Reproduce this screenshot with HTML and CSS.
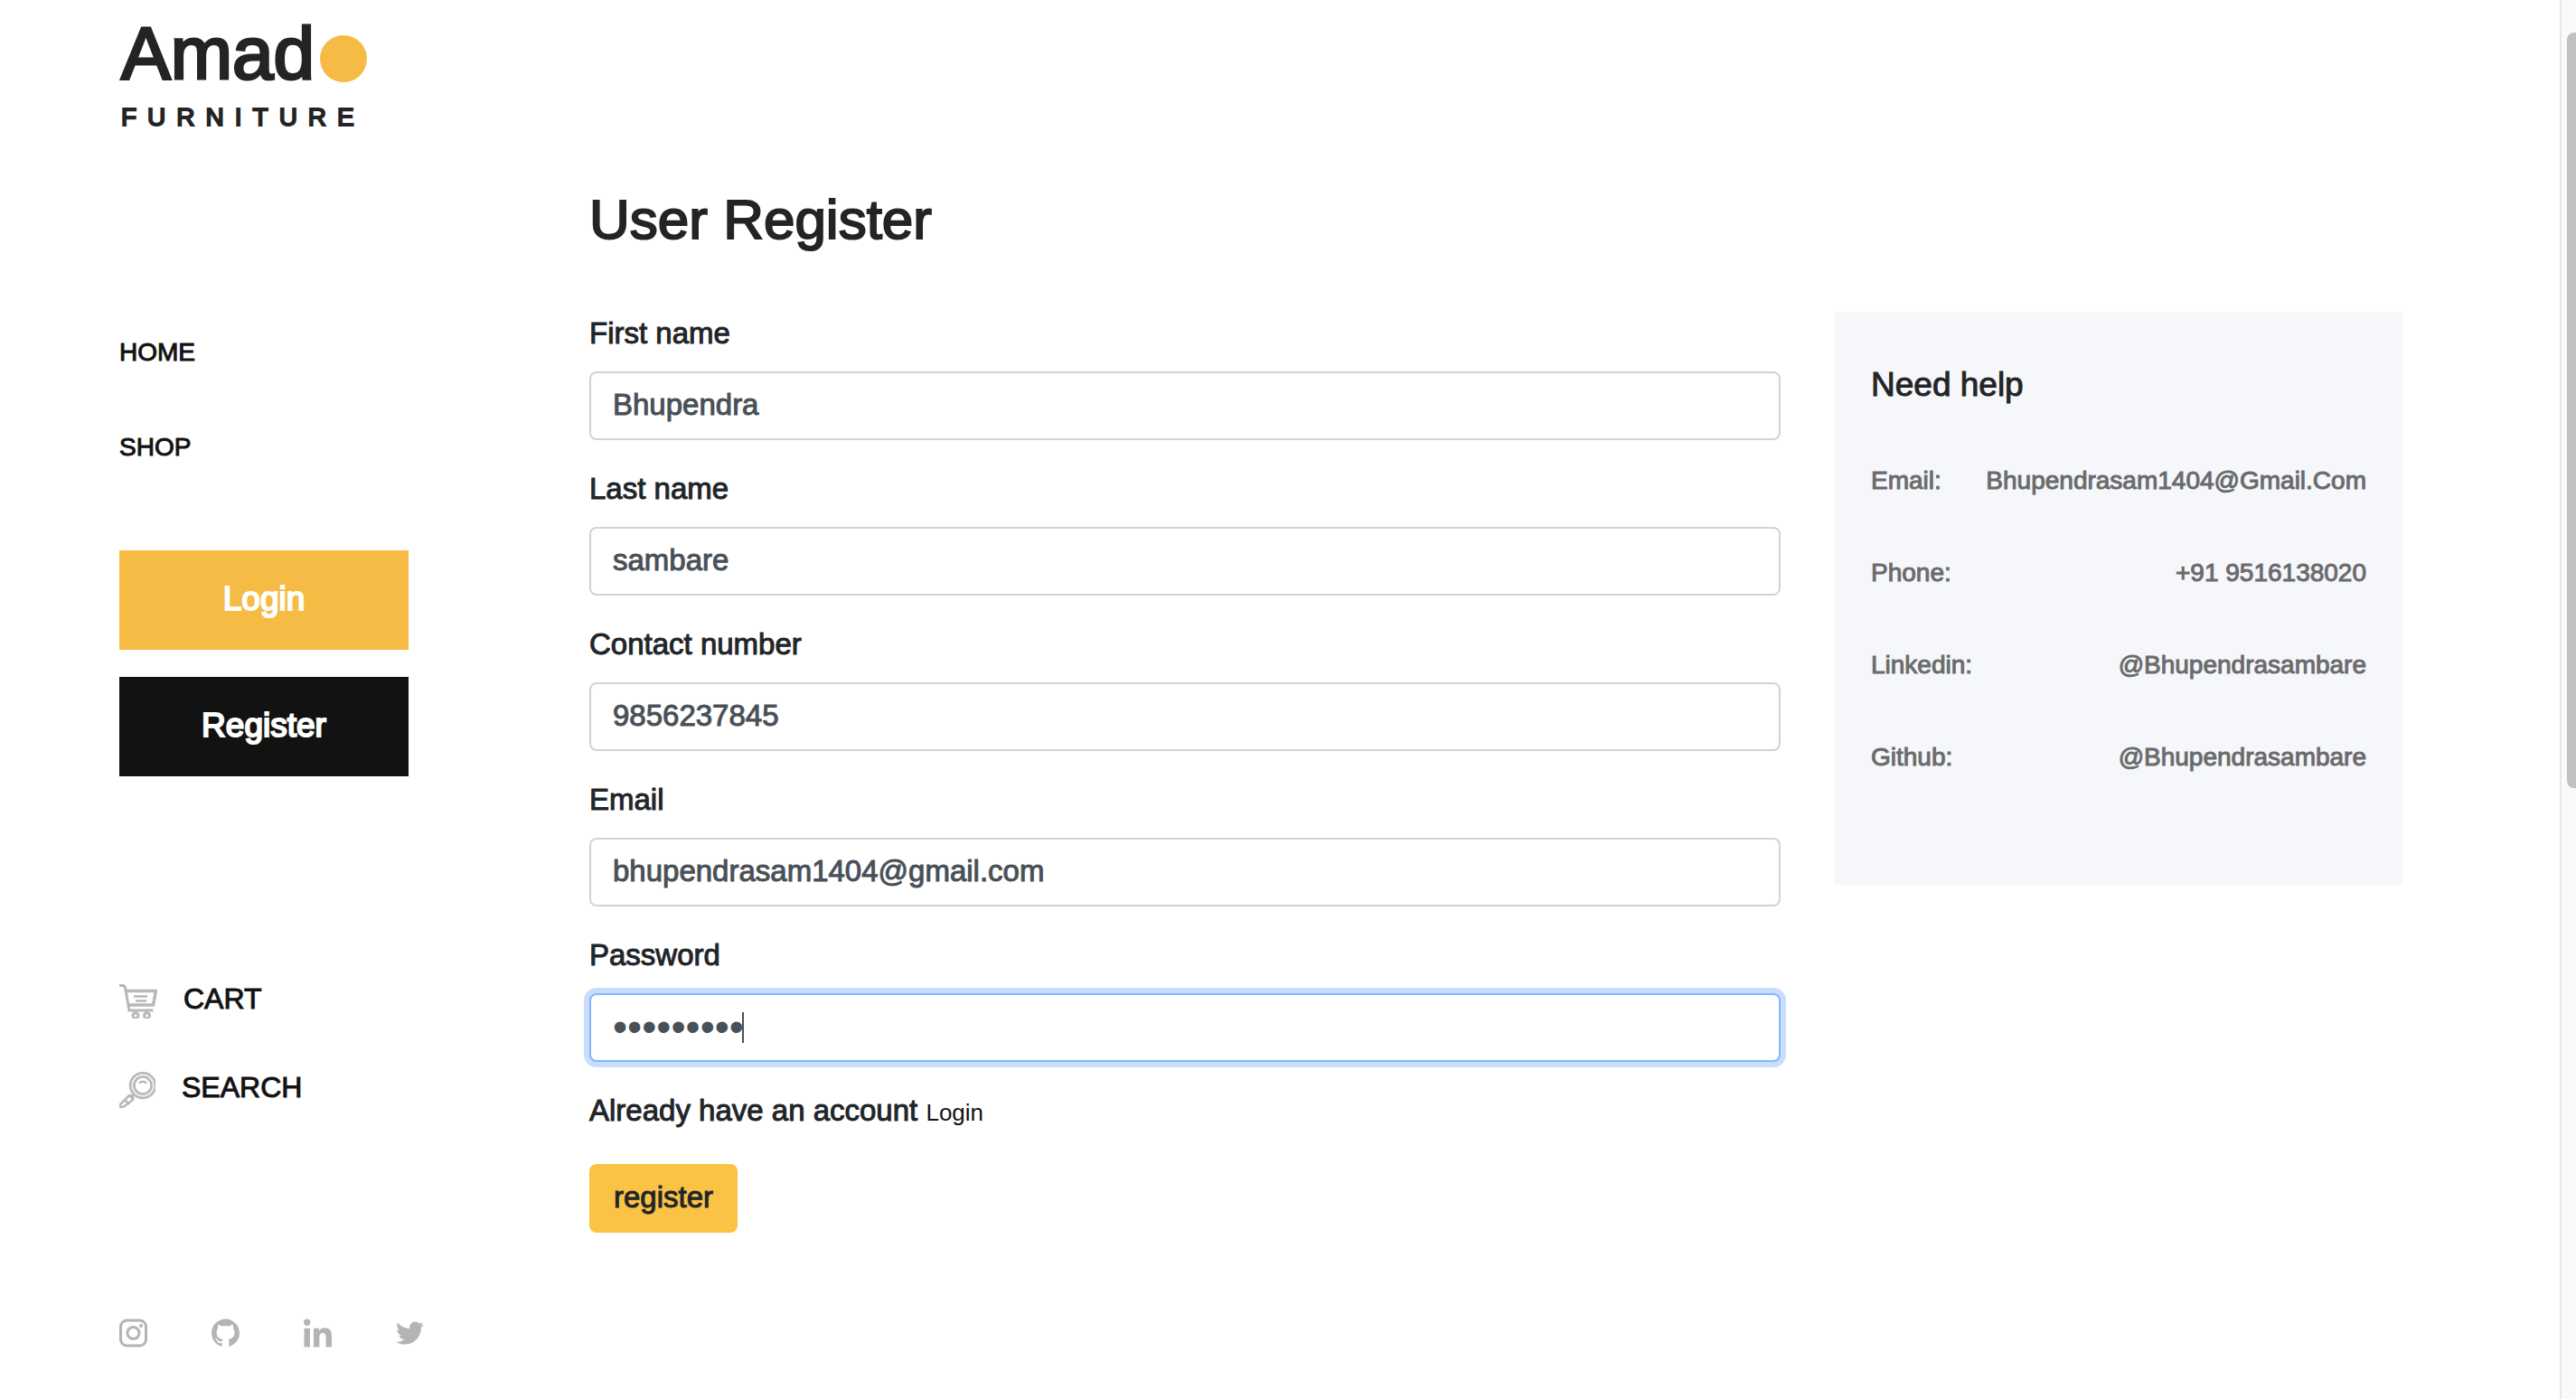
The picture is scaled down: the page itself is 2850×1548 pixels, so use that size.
FILE: index.html
```html
<!DOCTYPE html>
<html lang="en">
<head>
<meta charset="utf-8">
<title>Amado Furniture - User Register</title>
<link rel="stylesheet" href="styles.css">
</head>
<body>
<div class="page">
  <header class="sidebar">
    <a class="logo" href="#">
      <span class="logo-name">Amad<span class="logo-dot"></span></span>
      <span class="logo-tag">FURNITURE</span>
    </a>
    <nav class="nav">
      <a href="#">HOME</a>
      <a href="#">SHOP</a>
    </nav>
    <div class="account">
      <button class="block-btn" type="button">Login</button>
      <button class="block-btn dark" type="button">Register</button>
    </div>
    <div class="tools">
      <a href="#">
        <svg width="42" height="38" viewBox="0 0 42 38" fill="none" stroke="#b8b8b8" stroke-width="3">
          <path d="M0 1.500h3.500q2.500 0 3 2.500l4.500 25h26.500"/>
          <path d="M7 7.500h33.500l-3 15.500H10" stroke-width="3.500"/>
          <path d="M16 13.500h15M18 18.500h12" stroke-width="2.500"/>
          <circle cx="18" cy="34.800" r="3" stroke-width="3"/>
          <circle cx="30.500" cy="34.800" r="3" stroke-width="3"/>
        </svg>
        <span>CART</span>
      </a>
      <a href="#">
        <svg width="40" height="40" viewBox="0 0 40 40" fill="none" stroke="#b8b8b8" stroke-width="2.500">
          <circle cx="26" cy="15" r="14" fill="#ececec"/>
          <circle cx="26" cy="15" r="9.500" fill="#fff"/>
          <path d="M22 12.500q4-3.500 8 0"/>
          <path d="M16 25l-3 3M11 26l5 5M10.500 26.500L.5 36.500q0 3 3 3L15 31q1-2-1-4t-3.500-.5z"/>
          <path d="M6 31l5 5"/>
        </svg>
        <span>SEARCH</span>
      </a>
    </div>
    <div class="social">
      <a href="#" aria-label="Instagram">
        <svg width="31" height="32" viewBox="0 0 31 32" fill="none" stroke="#b4b4b4" stroke-width="3">
          <rect x="1.500" y="2" width="28" height="28" rx="7"/>
          <circle cx="15.500" cy="16" r="6.500"/>
          <circle cx="24" cy="8" r="2" fill="#b4b4b4" stroke="none"/>
        </svg>
      </a>
      <a href="#" aria-label="GitHub">
        <svg width="31" height="32" viewBox="0 0 16 16" fill="#b4b4b4"><path d="M8 0C3.580 0 0 3.580 0 8c0 3.540 2.290 6.530 5.470 7.590.4.070.55-.17.55-.38 0-.19-.01-.82-.01-1.490-2.010.37-2.530-.49-2.690-.94-.09-.23-.48-.94-.82-1.130-.28-.15-.68-.52-.01-.53.63-.01 1.080.58 1.230.82.72 1.210 1.870.87 2.330.66.070-.52.28-.87.51-1.070-1.780-.2-3.640-.89-3.640-3.950 0-.87.31-1.590.82-2.150-.08-.2-.36-1.020.08-2.120 0 0 .67-.21 2.200.82.64-.18 1.320-.27 2-.27s1.360.09 2 .27c1.530-1.040 2.200-.82 2.200-.82.44 1.100.16 1.920.08 2.120.51.56.82 1.270.82 2.150 0 3.070-1.870 3.750-3.650 3.950.29.25.54.73.54 1.480 0 1.070-.01 1.930-.01 2.200 0 .21.15.46.55.38A8.010 8.010 0 0 0 16 8c0-4.420-3.580-8-8-8z"/></svg>
      </a>
      <a href="#" aria-label="LinkedIn">
        <svg width="31" height="32" viewBox="0 0 448 448" fill="#b4b4b4"><path d="M100.280 448H7.400V148.900h92.880zM53.790 108.100C24.090 108.100 0 83.500 0 53.800a53.790 53.790 0 0 1 107.580 0c0 29.700-24.100 54.300-53.790 54.300zM447.900 448h-92.680V302.400c0-34.700-.7-79.200-48.290-79.200-48.290 0-55.690 37.700-55.690 76.700V448h-92.780V148.900h89.080v40.800h1.300c12.400-23.500 42.690-48.300 87.880-48.300 94 0 111.280 61.900 111.280 142.300V448z"/></svg>
      </a>
      <a href="#" aria-label="Twitter">
        <svg width="31" height="32" viewBox="0 0 512 512" fill="#b4b4b4"><path d="M459.370 151.716c.325 4.548.325 9.097.325 13.645 0 138.720-105.583 298.558-298.558 298.558-59.452 0-114.680-17.219-161.137-47.106 8.447.974 16.568 1.299 25.340 1.299 49.055 0 94.213-16.568 130.274-44.832-46.132-.975-84.792-31.188-98.112-72.772 6.498.974 12.995 1.624 19.818 1.624 9.421 0 18.843-1.300 27.614-3.573-48.081-9.747-84.143-51.980-84.143-102.985v-1.299c13.969 7.797 30.214 12.670 47.431 13.319-28.264-18.843-46.781-51.005-46.781-87.391 0-19.492 5.197-37.360 14.294-52.954 51.655 63.675 129.300 105.258 216.365 109.807-1.624-7.797-2.599-15.918-2.599-24.040 0-57.828 46.782-104.934 104.934-104.934 30.213 0 57.502 12.670 76.670 33.137 23.715-4.548 46.456-13.320 66.599-25.340-7.798 24.366-24.366 44.833-46.132 57.827 21.117-2.273 41.584-8.122 60.426-16.243-14.292 20.791-32.161 39.308-52.628 54.253z"/></svg>
      </a>
    </div>
  </header>

  <main class="main">
    <h1>User Register</h1>
    <div class="columns">
      <form class="form">
        <div class="field">
          <label for="first">First name</label>
          <input id="first" type="text" value="Bhupendra">
        </div>
        <div class="field">
          <label for="last">Last name</label>
          <input id="last" type="text" value="sambare">
        </div>
        <div class="field">
          <label for="contact">Contact number</label>
          <input id="contact" type="text" value="9856237845">
        </div>
        <div class="field">
          <label for="email">Email</label>
          <input id="email" type="email" value="bhupendrasam1404@gmail.com">
        </div>
        <div class="field">
          <label for="password">Password</label>
          <div class="password">
            <input id="password" class="active" type="password" value="secret123">
            <span class="caret"></span>
          </div>
        </div>
        <p class="hint">Already have an account <a href="#">Login</a></p>
        <button class="submit" type="button">register</button>
      </form>
      <aside class="help">
        <h2>Need help</h2>
        <dl>
          <div><dt>Email:</dt><dd>Bhupendrasam1404@Gmail.Com</dd></div>
          <div><dt>Phone:</dt><dd>+91 9516138020</dd></div>
          <div><dt>Linkedin:</dt><dd>@Bhupendrasambare</dd></div>
          <div><dt>Github:</dt><dd>@Bhupendrasambare</dd></div>
        </dl>
      </aside>
    </div>
  </main>

  <div class="scroll-track"><div class="scroll-thumb"></div></div>
</div>
</body>
</html>
```
FILE: styles.css
```css
* {
  box-sizing: border-box;
}

body,
h1,
h2,
p,
dl,
dd {
  margin: 0;
}

body {
  background: #fff;
  color: #212529;
  font-family: "Liberation Sans", Arial, sans-serif;
  font-size: 33px;
  line-height: 50px;
  -webkit-text-stroke: 1px currentColor;
}

a {
  color: #131212;
  text-decoration: none;
}

svg {
  display: block;
}

input,
button {
  font: inherit;
  -webkit-text-stroke: inherit;
}

.page {
  display: flex;
  min-height: 100vh;
}

/* Sidebar */
.sidebar {
  flex: 0 0 652px;
  padding: 12px 0 0 132px;
}

.logo {
  display: flex;
  flex-direction: column;
  height: 325px;
  padding-left: 2px;
  color: #242424;
}

.logo-name {
  display: flex;
  align-items: center;
  gap: 6px;
  font-size: 82px;
  line-height: 94px;
  -webkit-text-stroke-width: 3px;
}

.logo-dot {
  width: 52px;
  height: 52px;
  margin-top: 12px;
  border-radius: 50%;
  background: #f6bb44;
}

.logo-tag {
  font-size: 28px;
  line-height: 48px;
  letter-spacing: 12px;
  -webkit-text-stroke-width: 2px;
}

.nav {
  display: flex;
  flex-direction: column;
  font-size: 28px;
  line-height: 105px;
}

.account {
  display: flex;
  flex-direction: column;
  gap: 30px;
  width: 320px;
  margin-top: 62px;
}

.block-btn {
  height: 110px;
  padding: 0 0 2px;
  border: 0;
  background: #f6bb44;
  color: #fff;
  font-size: 37px;
  -webkit-text-stroke-width: 2px;
}

.block-btn.dark {
  background: #131212;
}

.tools {
  display: flex;
  flex-direction: column;
  gap: 58px;
  margin-top: 229px;
  font-size: 32px;
  line-height: 32px;
}

.tools a {
  display: flex;
  align-items: center;
  gap: 29px;
  height: 40px;
}

.tools span {
  padding-bottom: 6px;
}

.social {
  display: flex;
  gap: 71px;
  margin-top: 233px;
}

/* Main area */
.main {
  flex: 1;
  padding: 206px 174px 60px 0;
}

h1 {
  margin-bottom: 64px;
  color: #242424;
  font-size: 62px;
  font-weight: 400;
  line-height: 74px;
  -webkit-text-stroke-width: 2px;
}

.columns {
  display: flex;
  align-items: flex-start;
  gap: 60px;
}

.form {
  flex: 1;
}

.field {
  display: flex;
  flex-direction: column;
  gap: 17px;
  margin-bottom: 29px;
}

.field input {
  display: block;
  width: 100%;
  height: 76px;
  padding: 0 24px 3px;
  border: 2px solid #ced4da;
  border-radius: 8px;
  background: #fff;
  color: #495057;
  outline: 0;
}

.password {
  position: relative;
}

.field input.active {
  border-color: #84b7fa;
  box-shadow: 0 0 0 6px #c9ddfe;
  font-size: 46px;
  -webkit-text-stroke-width: 0;
}

.caret {
  position: absolute;
  top: 21px;
  left: 169px;
  width: 2px;
  height: 34px;
  background: #495057;
}

.hint {
  margin-bottom: 32px;
}

.hint a {
  font-size: 26px;
  -webkit-text-stroke-width: 0;
}

.submit {
  height: 76px;
  padding: 0 27px 3px;
  border: 0;
  border-radius: 8px;
  background: #fbc344;
  color: #212529;
}

.help {
  flex: 0 0 628px;
  margin-top: 1px;
  padding: 58px 40px 120px;
  background: #f5f7fb;
}

.help h2 {
  margin-bottom: 62px;
  color: #242424;
  font-size: 37px;
  font-weight: 400;
  line-height: 46px;
}

.help dl {
  display: flex;
  flex-direction: column;
  gap: 60px;
  color: #6b6b6b;
  font-size: 28px;
  line-height: 42px;
}

.help dl div {
  display: flex;
  justify-content: space-between;
}

/* Page scroll bar */
.scroll-track {
  flex: 0 0 18px;
  padding: 36px 0 0 6px;
  overflow: hidden;
  border-left: 2px solid #e8e8e8;
  background: #fafafa;
}

.scroll-thumb {
  height: 54vh;
  border-radius: 8px 0 0 8px;
  background: #c1c1c1;
}
```
